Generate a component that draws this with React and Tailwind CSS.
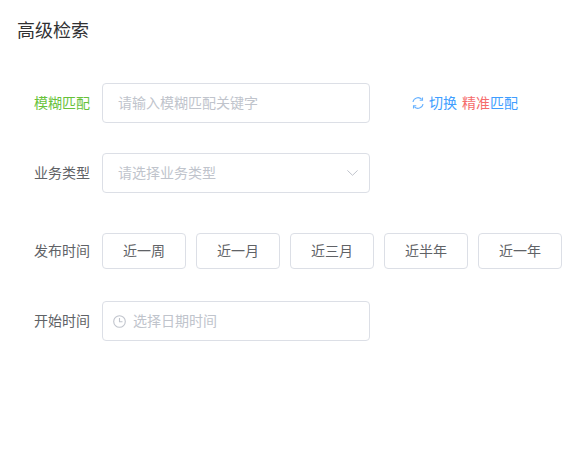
const ranges = ['近一周', '近一月', '近三月', '近半年', '近一年'];

function Label({ children, green }) {
  return (
    <label className={`w-[90px] shrink-0 text-right text-sm ${green ? 'text-[#67c23a]' : 'text-[#606266]'}`}>
      {children}
    </label>
  );
}

export default function App() {
  return (
    <div
      className="min-h-[476px] w-[563px] overflow-hidden bg-white"
      style={{ fontFamily: '"Liberation Sans", "Noto Sans CJK SC", sans-serif' }}
    >
      {/* Header */}
      <h1 className="pl-[17px] pt-[19px] text-lg leading-6 font-normal text-[#303133]">高级检索</h1>

      <div className="mt-10 flex flex-col">
        {/* 模糊匹配 */}
        <div className="flex h-10 items-center">
          <Label green>模糊匹配</Label>
          <div className="ml-3 flex h-10 w-[268px] items-center rounded border border-[#dcdfe6] pl-[15px] text-sm text-[#c0c4cc]">
            请输入模糊匹配关键字
          </div>
          <button className="ml-[42px] flex items-center text-sm text-[#409eff]">
            <svg width="12" height="12" viewBox="0 0 12 12" fill="none" stroke="#66b1ff" strokeWidth="1.1" className="mr-[5px]">
              <path d="M1 5A5 5 0 0 1 9.7 2.4" />
              <path d="M10.5 0.5V3.3H7.7" />
              <path d="M11 7A5 5 0 0 1 2.3 9.6" />
              <path d="M1.5 11.5V8.7H4.3" />
            </svg>
            切换&nbsp;
            <span className="ml-px text-[#f56c6c]">精准</span>
            匹配
          </button>
        </div>

        {/* 业务类型 */}
        <div className="mt-[30px] flex h-10 items-center">
          <Label>业务类型</Label>
          <div className="ml-3 flex h-10 w-[268px] items-center justify-between rounded border border-[#dcdfe6] pl-[15px] pr-[11px] text-sm text-[#c0c4cc]">
            请选择业务类型
            <svg width="11" height="6" viewBox="0 0 11 6" fill="none" stroke="currentColor" strokeWidth="1">
              <path d="M0.4 0.4L5.5 5.3L10.6 0.4" />
            </svg>
          </div>
        </div>

        {/* 发布时间 */}
        <div className="mt-10 flex h-9 items-center">
          <Label>发布时间</Label>
          <div className="ml-3 flex gap-[10px]">
            {ranges.map((r) => (
              <button
                key={r}
                className="h-9 w-[84px] rounded border border-[#dcdfe6] bg-white text-sm text-[#606266]"
              >
                {r}
              </button>
            ))}
          </div>
        </div>

        {/* 开始时间 */}
        <div className="mt-8 flex h-10 items-center">
          <Label>开始时间</Label>
          <div className="ml-3 flex h-10 w-[268px] items-center rounded border border-[#dcdfe6] pl-[10px] text-sm text-[#c0c4cc]">
            <svg width="13" height="13" viewBox="0 0 13 13" fill="none" stroke="currentColor" strokeWidth="1.1" className="mr-[7px]">
              <circle cx="6.5" cy="6.5" r="5.8" />
              <path d="M6.5 3V6.8H9.5" />
            </svg>
            选择日期时间
          </div>
        </div>
      </div>
    </div>
  );
}
